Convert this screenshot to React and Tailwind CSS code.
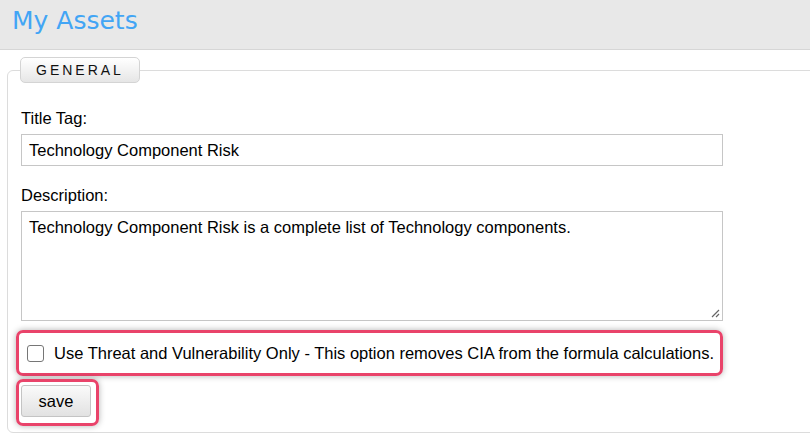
import React from "react";

export default function App() {
  return (
    <div className="w-[810px] h-[438px] overflow-hidden bg-white font-['Liberation_Sans',Arial,sans-serif] text-[16.5px] text-black">
      {/* HEADER */}
      <div className="h-[50px] bg-[#e8e8e8] border-b border-[#d6d6d6] pl-[12px] pt-[6px]">
        <h1 className="font-['DejaVu_Sans',Verdana,sans-serif] text-[25px] leading-[30px] text-[#42a5f5]">My Assets</h1>
      </div>

      <fieldset className="ml-[7px] mt-[7px] -mr-[20px] h-[376px] border border-[#dcdcdc] rounded-[6px] pl-[13px] pr-0 pt-0">
        <legend className="-ml-px px-[15px] h-[26px] leading-[24px] border border-[#d4d4d4] rounded-[5px] bg-gradient-to-b from-white to-[#e6e6e6] text-[14px] tracking-[3px] text-[#111]">
          GENERAL
        </legend>

        <div className="pt-[26px] w-[702px]">
          <label className="block leading-[18px]">Title Tag:</label>
          <div className="mt-[7px] h-[32px] border border-[#c6c6c6] px-[7px] leading-[30px]">
            Technology Component Risk
          </div>

          <label className="block mt-[20px] leading-[18px]">Description:</label>
          <div className="relative mt-[7px] h-[110px] border border-[#c6c6c6] px-[7px] pt-[5px] leading-[20px]">
            Technology Component Risk is a complete list of Technology components.
            <svg className="absolute right-[2px] bottom-[2px]" width="10" height="10" viewBox="0 0 10 10">
              <path d="M9 2 L2 9 M9 6 L6 9" stroke="#666" strokeWidth="1.2" />
            </svg>
          </div>
        </div>

        <div className="-ml-[5px] mt-[9px] w-[707px] h-[46px] border-[3.5px] border-[#e9436a] rounded-[7px] shadow-[0_0_6px_rgba(0,0,0,0.3)] flex items-center pl-[8px] gap-[10px]">
          <span className="w-[17px] h-[17px] border border-[#767676] rounded-[3px] bg-white" />
          <span>Use Threat and Vulnerability Only - This option removes CIA from the formula calculations.</span>
        </div>

        <div className="-ml-[5px] mt-[3px] w-[83px] h-[47px] border-[3.5px] border-[#e9436a] rounded-[7px] shadow-[0_0_6px_rgba(0,0,0,0.3)] pl-[2px] pt-[3px]">
          <button className="w-[70px] h-[32px] border border-[#c4c4c4] rounded-[3px] bg-gradient-to-b from-[#fafafa] to-[#e2e2e2] text-[16.5px]">
            save
          </button>
        </div>
      </fieldset>
    </div>
  );
}
